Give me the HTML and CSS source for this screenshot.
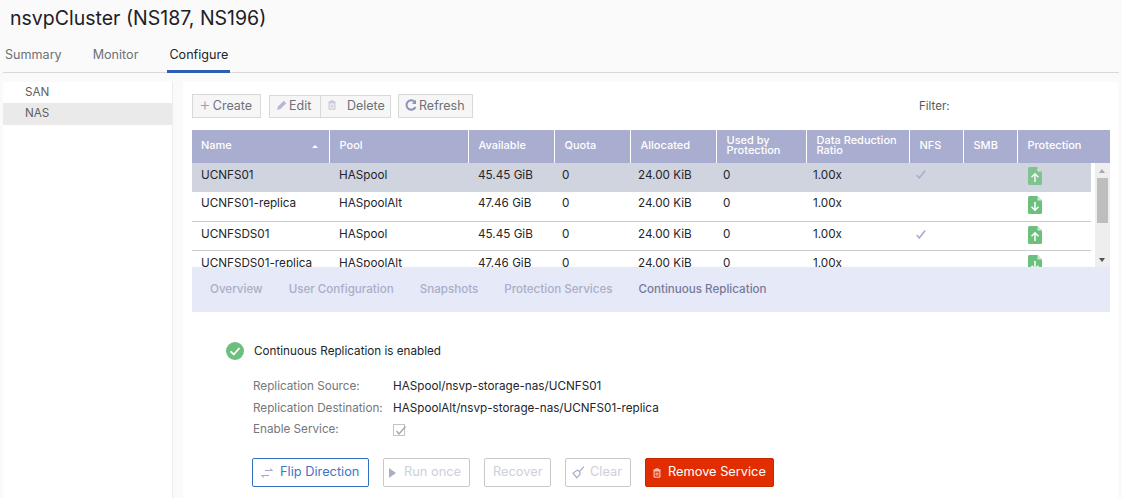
FILE: index.html
```html
<!DOCTYPE html>
<html lang="en">
<head>
    <meta charset="UTF-8">
    <title>nsvpCluster</title>
    <link rel="stylesheet" href="styles.css">
</head>
<body>
    <svg class="defs" width="0" height="0">
        <symbol id="file-up" viewBox="0 0 14 18">
            <path d="M1.5 0H9.5L14 4.500V16.500Q14 18 12.500 18H1.500Q0 18 0 16.500V1.500Q0 0 1.500 0Z" fill="#6cbf7c"/>
            <path d="M9.500 0L14 4.500H9.500Z" fill="#cfe9d4"/>
            <path d="M7 15V7M3.500 10.300L7 6.800L10.500 10.300" fill="none" stroke="#fff" stroke-width="1.500"/>
        </symbol>
        <symbol id="file-down" viewBox="0 0 14 18">
            <path d="M1.5 0H9.5L14 4.500V16.500Q14 18 12.500 18H1.500Q0 18 0 16.500V1.500Q0 0 1.500 0Z" fill="#6cbf7c"/>
            <path d="M9.500 0L14 4.500H9.500Z" fill="#cfe9d4"/>
            <path d="M7 6V14M3.500 10.700L7 14.200L10.500 10.700" fill="none" stroke="#fff" stroke-width="1.500"/>
        </symbol>
        <symbol id="tick" viewBox="0 0 10 9">
            <path d="M.8 5L3.300 8L9.200 .5" fill="none" stroke="#a9add0" stroke-width="1.600"/>
        </symbol>
        <symbol id="trash" viewBox="0 0 12 12">
            <path d="M2.500 3.500H9.500V11H2.500ZM1.500 2.500H10.500M4.500 2.500V1H7.500V2.500M5 5.500V9M7 5.500V9" fill="none" stroke="currentColor"/>
        </symbol>
    </svg>

    <h1 class="title">nsvpCluster (NS187, NS196)</h1>
    <nav class="tabs">
        <a class="tab">Summary</a>
        <a class="tab">Monitor</a>
        <a class="tab active">Configure</a>
    </nav>

    <div class="content">
        <aside class="sidebar">
            <div class="side-item">SAN</div>
            <div class="side-item selected">NAS</div>
        </aside>

        <main class="main">
            <div class="toolbar">
                <button class="tool tool-create"><span class="plus">+</span> Create</button>
                <div class="tool-group">
                    <button class="tool tool-edit">
                        <svg class="ico" viewBox="0 0 12 12"><path d="M1 11L2 7.500L7.800 1.700L10.300 4.200L4.500 10Z" fill="#b5b9d0"/></svg>
                        Edit
                    </button>
                    <button class="tool tool-delete">
                        <svg class="ico"><use href="#trash"/></svg>
                        <span class="delete-label">Delete</span>
                    </button>
                </div>
                <button class="tool tool-refresh">
                    <svg class="ico" viewBox="0 0 12 12"><path d="M10 3.200A4.700 4.700 0 1 0 10.500 8" fill="none" stroke="#8d93ba" stroke-width="2"/><path d="M11 .8V5H6.800Z" fill="#8d93ba"/></svg>
                    Refresh
                </button>
                <span class="filter">Filter:</span>
            </div>

            <div class="grid-wrap">
                <table class="grid">
                    <colgroup>
                        <col class="h-name"><col class="h-pool"><col class="h-avail"><col class="h-quota"><col class="h-alloc"><col class="h-used"><col class="h-ratio"><col class="h-nfs"><col class="h-smb"><col class="h-prot">
                    </colgroup>
                    <thead>
                        <tr>
                            <th>Name<span class="sort"></span></th>
                            <th>Pool</th>
                            <th>Available</th>
                            <th>Quota</th>
                            <th>Allocated</th>
                            <th class="two-line">Used by Protection</th>
                            <th class="two-line">Data Reduction Ratio</th>
                            <th>NFS</th>
                            <th>SMB</th>
                            <th>Protection</th>
                        </tr>
                    </thead>
                </table>
                <div class="grid-body">
                    <table class="grid">
                        <colgroup>
                            <col class="b-name"><col class="b-pool"><col class="b-avail"><col class="b-quota"><col class="b-alloc"><col class="b-used"><col class="b-ratio"><col class="b-nfs"><col class="b-smb"><col class="b-prot">
                        </colgroup>
                        <tbody>
                            <tr class="row-selected">
                                <td>UCNFS01</td><td>HASpool</td><td>45.45 GiB</td><td>0</td><td>24.00 KiB</td><td>0</td><td>1.00x</td>
                                <td><svg class="tick"><use href="#tick"/></svg></td><td></td>
                                <td class="prot"><svg class="file faded"><use href="#file-up"/></svg></td>
                            </tr>
                            <tr>
                                <td>UCNFS01-replica</td><td>HASpoolAlt</td><td>47.46 GiB</td><td>0</td><td>24.00 KiB</td><td>0</td><td>1.00x</td>
                                <td></td><td></td>
                                <td class="prot"><svg class="file"><use href="#file-down"/></svg></td>
                            </tr>
                            <tr>
                                <td>UCNFSDS01</td><td>HASpool</td><td>45.45 GiB</td><td>0</td><td>24.00 KiB</td><td>0</td><td>1.00x</td>
                                <td><svg class="tick"><use href="#tick"/></svg></td><td></td>
                                <td class="prot"><svg class="file"><use href="#file-up"/></svg></td>
                            </tr>
                            <tr>
                                <td>UCNFSDS01-replica</td><td>HASpoolAlt</td><td>47.46 GiB</td><td>0</td><td>24.00 KiB</td><td>0</td><td>1.00x</td>
                                <td></td><td></td>
                                <td class="prot"><svg class="file"><use href="#file-down"/></svg></td>
                            </tr>
                        </tbody>
                    </table>
                    <div class="scrollbar">
                        <span class="arrow-up"></span>
                        <span class="thumb"></span>
                        <span class="arrow-down"></span>
                    </div>
                </div>
            </div>

            <div class="detail-tabs">
                <a class="detail-tab">Overview</a>
                <a class="detail-tab">User Configuration</a>
                <a class="detail-tab">Snapshots</a>
                <a class="detail-tab">Protection Services</a>
                <a class="detail-tab current">Continuous Replication</a>
            </div>

            <section class="detail">
                <div class="status">
                    <svg class="status-ico" viewBox="0 0 18 18"><circle cx="9" cy="9" r="9" fill="#6cbf7c"/><path d="M4.500 9.300L7.800 12.500L13.500 6" fill="none" stroke="#fff" stroke-width="1.800"/></svg>
                    Continuous Replication is enabled
                </div>
                <dl class="props">
                    <dt>Replication Source:</dt><dd>HASpool/nsvp-storage-nas/UCNFS01</dd>
                    <dt>Replication Destination:</dt><dd>HASpoolAlt/nsvp-storage-nas/UCNFS01-replica</dd>
                    <dt>Enable Service:</dt>
                    <dd><span class="checkbox"><svg viewBox="0 0 12 12"><path d="M2.500 6L5 9L11.500 1.500" fill="none" stroke="#a5a5a5" stroke-width="1.300"/></svg></span></dd>
                </dl>
                <div class="actions">
                    <button class="btn btn-primary btn-flip">
                        <svg class="ico" viewBox="0 0 12 12"><path d="M4 3.500H11.500M9 1.500L11.500 3.500M8 8.500H.5M3 10.500L.5 8.500" fill="none" stroke="#a4a9c8"/></svg>
                        Flip Direction
                    </button>
                    <button class="btn btn-run"><span class="play"></span>Run once</button>
                    <button class="btn btn-recover">Recover</button>
                    <button class="btn btn-clear">
                        <svg class="ico" viewBox="0 0 12 12"><path d="M11 .5L7 5M7 5L5 3.800L1 6.500L4.500 11L7.500 7.500Z" fill="none" stroke="#a4a9c8" stroke-width="1.100"/></svg>
                        Clear
                    </button>
                    <button class="btn btn-danger">
                        <svg class="ico"><use href="#trash"/></svg>
                        Remove Service
                    </button>
                </div>
            </section>
        </main>
    </div>
</body>
</html>
```

FILE: styles.css
```css
* {
    box-sizing: border-box;
}

html, body {
    height: 100%;
}

body {
    margin: 0;
    background-color: #fafafa;
    color: #22252b;
    font-family: Inter, "Liberation Sans", sans-serif;
    font-size: 11.7px;
    overflow: hidden;
}

.defs {
    position: absolute;
}

.title {
    margin: 0;
    padding: 6px 0 0 10px;
    height: 44px;
    font-size: 19.5px;
    font-weight: 400;
    line-height: 24px;
    color: #1d2026;
}

.tabs {
    display: flex;
    height: 29px;
    margin: 0 3px;
    border-bottom: 1px solid #d9d9d9;
}

.tab {
    padding: 3px 2px 0;
    margin-right: 27px;
    font-size: 12.6px;
    line-height: 16px;
    color: #6d7178;
}

.tab.active {
    margin-right: 0;
    color: #22252b;
    border-bottom: 3px solid #2f5db3;
    height: 29px;
}

.content {
    display: flex;
    margin-top: 9px;
    height: 417px;
}

.sidebar {
    width: 170px;
    margin-left: 3px;
    background-color: #fff;
    border-right: 1px solid #ededed;
}

.side-item {
    height: 21px;
    padding-left: 22px;
    line-height: 20px;
    color: #5d6167;
}

.side-item.selected {
    height: 22px;
    background-color: #eaeaea;
}

.main {
    width: 935px;
    margin-left: 10px;
    padding: 12px 0 0 9px;
    background-color: #fff;
}

.toolbar {
    display: flex;
    align-items: center;
    height: 24px;
    margin-bottom: 12px;
}

.tool {
    display: flex;
    align-items: center;
    height: 24px;
    padding: 0 0 2px 6px;
    background-color: #f6f6f6;
    border: 1px solid #d9d9d9;
    color: #6d7178;
    font: inherit;
    font-size: 12.5px;
}

.ico {
    width: 12px;
    height: 12px;
    flex: none;
}

.tool .ico {
    margin-right: 3px;
    color: #b5b9d0;
}

.plus {
    margin-right: 2px;
    font-size: 18px;
    font-weight: 300;
    line-height: 16px;
    color: #9a9fbd;
}

.tool-create {
    width: 69px;
}

.tool-group {
    display: flex;
    margin-left: 8px;
}

.tool-edit {
    width: 52px;
    height: 23px;
}

.tool-edit .ico {
    margin-right: 1px;
}

.tool-delete {
    width: 70px;
    height: 23px;
    border-left: none;
}

.tool-delete .ico {
    width: 10px;
    height: 10px;
}

.delete-label {
    margin-left: 7px;
}

.tool-refresh {
    width: 75px;
    margin-left: 7px;
}

.tool-refresh .ico {
    margin-right: 2px;
}

.filter {
    margin-left: 446px;
    font-size: 11.5px;
    color: #55585e;
}

.grid-wrap {
    width: 918px;
}

.grid {
    width: 918px;
    border-collapse: collapse;
    table-layout: fixed;
}

/* header and body columns are not aligned on the original page */
.h-name { width: 137px; }
.h-pool { width: 139px; }
.h-avail { width: 86px; }
.h-quota { width: 76px; }
.h-alloc { width: 86px; }
.h-used { width: 90px; }
.h-ratio { width: 103px; }
.h-nfs { width: 54px; }
.h-smb { width: 54px; }
.h-prot { width: 93px; }

.b-name { width: 138px; }
.b-pool { width: 139px; }
.b-avail { width: 84px; }
.b-quota { width: 76px; }
.b-alloc { width: 85px; }
.b-used { width: 90px; }
.b-ratio { width: 102px; }
.b-nfs { width: 57px; }
.b-smb { width: 57px; }
.b-prot { width: 71px; }

.grid th {
    position: relative;
    height: 33px;
    padding: 0 9px 4px 10px;
    background-color: #a9add0;
    border-right: 1px solid #fff;
    color: #fff;
    font-size: 11px;
    font-weight: 450;
    text-align: left;
    line-height: 10px;
}

.grid th:first-child {
    padding-left: 9px;
}

.grid th:last-child {
    border-right: none;
}

.sort {
    position: absolute;
    right: 11px;
    top: 15px;
    border-left: 3px solid transparent;
    border-right: 3px solid transparent;
    border-bottom: 3px solid #fff;
}

.grid-body {
    position: relative;
    height: 104px;
    overflow: hidden;
}

.grid-body .grid {
    width: 899px;
}

.grid td {
    height: 29px;
    padding: 0 9px 3px;
    border-bottom: 1px solid #cdcdcd;
    color: #22252b;
    font-size: 11.7px;
}

.grid .row-selected td {
    height: 29px;
    padding-bottom: 6px;
    background-color: #d0d4df;
    border-bottom: none;
}

.grid tr:nth-child(2) td {
    height: 29px;
    padding-bottom: 6px;
}

.grid td.prot,
.grid .row-selected td.prot,
.grid tr:nth-child(2) td.prot {
    padding: 4px 0 0 8px;
    vertical-align: top;
}

.tick {
    display: block;
    width: 10px;
    height: 9px;
    margin-left: 1px;
}

.file {
    display: block;
    width: 14px;
    height: 18px;
}

.file.faded {
    opacity: .8;
}

.scrollbar {
    position: absolute;
    top: 0;
    right: 0;
    bottom: 0;
    width: 15px;
    background-color: #eeeeee;
}

.thumb {
    position: absolute;
    top: 15px;
    left: 2px;
    width: 11px;
    height: 45px;
    background-color: #bebebe;
}

.arrow-up, .arrow-down {
    position: absolute;
    left: 4px;
    border-left: 3.500px solid transparent;
    border-right: 3.500px solid transparent;
}

.arrow-up {
    top: 6px;
    border-bottom: 4px solid #a8a8a8;
}

.arrow-down {
    bottom: 5px;
    border-top: 4px solid #505050;
}

.detail-tabs {
    display: flex;
    gap: 26px;
    width: 918px;
    height: 45px;
    padding: 14px 0 0 18px;
    background-color: #e6e9f7;
    font-size: 11.6px;
    font-weight: 500;
    line-height: 16px;
}

.detail-tab {
    color: #a9aec9;
}

.detail-tab.current {
    color: #767a9a;
}

.detail {
    padding: 30px 0 0 34px;
}

.status {
    display: flex;
    align-items: center;
    gap: 10px;
}

.status-ico {
    width: 18px;
    height: 18px;
}

.props {
    display: grid;
    grid-template-columns: 140px auto;
    grid-auto-rows: 21.500px;
    align-items: center;
    margin: 15.500px 0 0 27px;
}

.props dt {
    color: #74777d;
}

.props dd {
    margin: 0;
}

.checkbox {
    display: block;
    width: 12px;
    height: 12px;
    margin-top: 2px;
    border: 1px solid #c4c4c4;
}

.checkbox svg {
    display: block;
    width: 12px;
    height: 12px;
}

.actions {
    display: flex;
    gap: 14px;
    margin: 17.500px 0 0 26px;
}

.btn {
    display: flex;
    align-items: center;
    height: 29px;
    padding: 0 0 2px 8px;
    background-color: #fff;
    border: 1px solid #c9c9c9;
    border-radius: 2px;
    color: #cdd0da;
    font: inherit;
    font-size: 12.800px;
}

.btn-primary {
    width: 117px;
    border-color: #2f6fc4;
    color: #3f74c6;
}

.btn-flip .ico {
    margin: 3px 7px 0 0;
}

.btn-run {
    width: 87px;
    padding-left: 5px;
}

.play {
    margin: 3px 8px 0 0;
    border-top: 5px solid transparent;
    border-bottom: 5px solid transparent;
    border-left: 7px solid #a9aec9;
}

.btn-recover {
    width: 67px;
}

.btn-clear {
    width: 66px;
    padding-left: 6px;
}

.btn-clear .ico {
    width: 13px;
    height: 13px;
    margin: 3px 5px 0 0;
}

.btn-danger {
    width: 129px;
    padding-left: 6px;
    background-color: #e12d00;
    border-color: #c62800;
    color: #fff;
}

.btn-danger .ico {
    width: 10px;
    height: 10px;
    margin: 4px 6px 0 0;
    color: #fff;
}
```
